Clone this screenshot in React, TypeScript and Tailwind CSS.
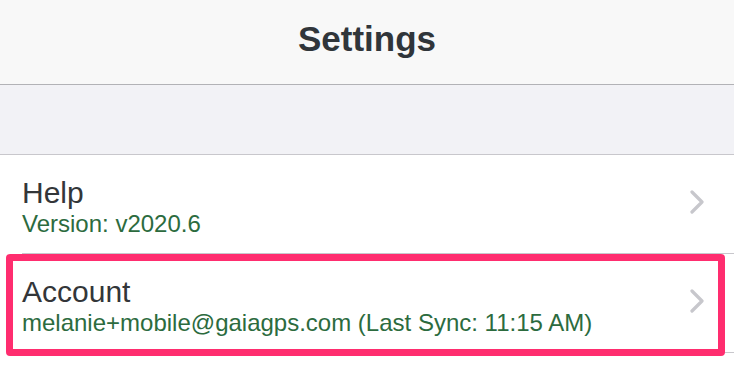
const Chevron = () => (
  <svg width="14" height="24" viewBox="0 0 14 24" fill="none" className="shrink-0">
    <path d="M2 2 L12 12 L2 22" stroke="#c7c7cc" strokeWidth="3.2" strokeLinecap="round" strokeLinejoin="round" />
  </svg>
);

const Row = ({ title, detail, highlight }: { title: string; detail: string; highlight?: boolean }) => (
  <div className="relative flex h-[99px]">
    <div className="ml-[22px] flex flex-1 items-center border-b border-[#c8c7cc] pr-[30px]">
      <div className="mt-[6px] flex-1">
        <div className="text-[30px] leading-[34px] text-[#333639]">{title}</div>
        <div className="text-[24px] leading-[28px] text-[#2c6b3e]">{detail}</div>
      </div>
      <div className="mb-[4px]">
        <Chevron />
      </div>
    </div>
    {highlight && (
      <div className="pointer-events-none absolute left-[6px] right-[9px] top-0 -bottom-[3px] rounded-[4px] border-[7px] border-[#ff2d6f]" />
    )}
  </div>
);

export default function App() {
  return (
    <div className="h-[369px] w-[734px] overflow-hidden bg-white font-['Liberation_Sans',Arial,sans-serif]">
      <div className="flex h-[85px] items-center justify-center border-b border-[#b2b2b6] bg-[#f8f8f8] pb-[5px]">
        <h1 className="text-[35px] font-bold text-[#30353a]">Settings</h1>
      </div>
      <div className="h-[70px] border-b border-[#c8c7cc] bg-[#f2f2f6]" />
      <Row title="Help" detail="Version: v2020.6" />
      <Row title="Account" detail="melanie+mobile@gaiagps.com (Last Sync: 11:15 AM)" highlight />
    </div>
  );
}
